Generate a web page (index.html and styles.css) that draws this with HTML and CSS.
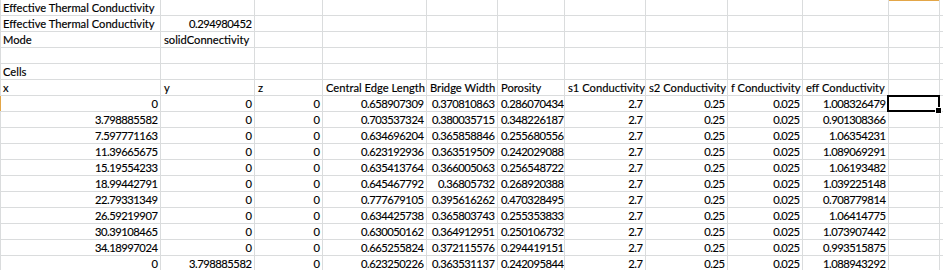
FILE: index.html
```html
<!DOCTYPE html>
<html>
<head>
<meta charset="utf-8">
<link rel="stylesheet" href="styles.css">
</head>
<body>
<div class="sheet">
  <div class="c a">Effective Thermal Conductivity</div><div class="c"></div><div class="c"></div><div class="c"></div><div class="c"></div><div class="c"></div><div class="c"></div><div class="c"></div><div class="c"></div><div class="c"></div><div class="c colhl"></div><div class="c"></div>
  <div class="c a">Effective Thermal Conductivity</div><div class="c r">0.294980452</div><div class="c"></div><div class="c"></div><div class="c"></div><div class="c"></div><div class="c"></div><div class="c"></div><div class="c"></div><div class="c"></div><div class="c"></div><div class="c"></div>
  <div class="c a">Mode</div><div class="c ov">solidConnectivity</div><div class="c"></div><div class="c"></div><div class="c"></div><div class="c"></div><div class="c"></div><div class="c"></div><div class="c"></div><div class="c"></div><div class="c"></div><div class="c"></div>
  <div class="c a"></div><div class="c"></div><div class="c"></div><div class="c"></div><div class="c"></div><div class="c"></div><div class="c"></div><div class="c"></div><div class="c"></div><div class="c"></div><div class="c"></div><div class="c"></div>
  <div class="c a">Cells</div><div class="c"></div><div class="c"></div><div class="c"></div><div class="c"></div><div class="c"></div><div class="c"></div><div class="c"></div><div class="c"></div><div class="c"></div><div class="c"></div><div class="c"></div>
  <div class="c a">x</div><div class="c">y</div><div class="c">z</div><div class="c">Central Edge Length</div><div class="c">Bridge Width</div><div class="c">Porosity</div><div class="c">s1 Conductivity</div><div class="c">s2 Conductivity</div><div class="c">f Conductivity</div><div class="c">eff Conductivity</div><div class="c"></div><div class="c"></div>
  <div class="c a r rowhl">0</div><div class="c r">0</div><div class="c r">0</div><div class="c r">0.658907309</div><div class="c r">0.370810863</div><div class="c r">0.286070434</div><div class="c r">2.7</div><div class="c r">0.25</div><div class="c r">0.025</div><div class="c r">1.008326479</div><div class="c sel"><span class="selbox"><span class="handle"></span></span></div><div class="c"></div>
  <div class="c a r">3.798885582</div><div class="c r">0</div><div class="c r">0</div><div class="c r">0.703537324</div><div class="c r">0.380035715</div><div class="c r">0.348226187</div><div class="c r">2.7</div><div class="c r">0.25</div><div class="c r">0.025</div><div class="c r">0.901308366</div><div class="c"></div><div class="c"></div>
  <div class="c a r">7.597771163</div><div class="c r">0</div><div class="c r">0</div><div class="c r">0.634696204</div><div class="c r">0.365858846</div><div class="c r">0.255680556</div><div class="c r">2.7</div><div class="c r">0.25</div><div class="c r">0.025</div><div class="c r">1.06354231</div><div class="c"></div><div class="c"></div>
  <div class="c a r">11.39665675</div><div class="c r">0</div><div class="c r">0</div><div class="c r">0.623192936</div><div class="c r">0.363519509</div><div class="c r">0.242029088</div><div class="c r">2.7</div><div class="c r">0.25</div><div class="c r">0.025</div><div class="c r">1.089069291</div><div class="c"></div><div class="c"></div>
  <div class="c a r">15.19554233</div><div class="c r">0</div><div class="c r">0</div><div class="c r">0.635413764</div><div class="c r">0.366005063</div><div class="c r">0.256548722</div><div class="c r">2.7</div><div class="c r">0.25</div><div class="c r">0.025</div><div class="c r">1.06193482</div><div class="c"></div><div class="c"></div>
  <div class="c a r">18.99442791</div><div class="c r">0</div><div class="c r">0</div><div class="c r">0.645467792</div><div class="c r">0.36805732</div><div class="c r">0.268920388</div><div class="c r">2.7</div><div class="c r">0.25</div><div class="c r">0.025</div><div class="c r">1.039225148</div><div class="c"></div><div class="c"></div>
  <div class="c a r">22.79331349</div><div class="c r">0</div><div class="c r">0</div><div class="c r">0.777679105</div><div class="c r">0.395616262</div><div class="c r">0.470328495</div><div class="c r">2.7</div><div class="c r">0.25</div><div class="c r">0.025</div><div class="c r">0.708779814</div><div class="c"></div><div class="c"></div>
  <div class="c a r">26.59219907</div><div class="c r">0</div><div class="c r">0</div><div class="c r">0.634425738</div><div class="c r">0.365803743</div><div class="c r">0.255353833</div><div class="c r">2.7</div><div class="c r">0.25</div><div class="c r">0.025</div><div class="c r">1.06414775</div><div class="c"></div><div class="c"></div>
  <div class="c a r">30.39108465</div><div class="c r">0</div><div class="c r">0</div><div class="c r">0.630050162</div><div class="c r">0.364912951</div><div class="c r">0.250106732</div><div class="c r">2.7</div><div class="c r">0.25</div><div class="c r">0.025</div><div class="c r">1.073907442</div><div class="c"></div><div class="c"></div>
  <div class="c a r">34.18997024</div><div class="c r">0</div><div class="c r">0</div><div class="c r">0.665255824</div><div class="c r">0.372115576</div><div class="c r">0.294419151</div><div class="c r">2.7</div><div class="c r">0.25</div><div class="c r">0.025</div><div class="c r">0.993515875</div><div class="c"></div><div class="c"></div>
  <div class="c a r">0</div><div class="c r">3.798885582</div><div class="c r">0</div><div class="c r">0.623250226</div><div class="c r">0.363531137</div><div class="c r">0.242095844</div><div class="c r">2.7</div><div class="c r">0.25</div><div class="c r">0.025</div><div class="c r">1.088943292</div><div class="c"></div><div class="c"></div>
</div>
</body>
</html>
```

FILE: styles.css
```css
html, body {
  margin: 0;
  padding: 0;
  background: #ffffff;
}
body {
  font-family: Lato, "Liberation Sans", sans-serif;
  font-size: 11.2px;
  color: #000000;
  -webkit-text-stroke: 0.15px #000000;
  overflow: hidden;
}
.sheet {
  display: grid;
  grid-template-columns: 161px 94px 68px 104px 71px 67px 81px 82px 75px 86px 51px 1fr;
  grid-auto-rows: 16px;
  width: 943px;
}
.c {
  box-sizing: border-box;
  border-right: 1px solid #dadcdd;
  border-bottom: 1px solid #dadcdd;
  height: 16px;
  line-height: 15px;
  padding: 0 2px 0 3px;
  white-space: nowrap;
  overflow: hidden;
  position: relative;
}
.a {
  box-shadow: inset 1px 0 0 #dadcdd;
}
.r {
  text-align: right;
  letter-spacing: -0.45px;
  padding-right: 2.5px;
}
.ov {
  overflow: visible;
}
.rowhl {
  box-shadow: inset 1px 0 0 #e3a647;
}
.colhl {
  box-shadow: inset 0 1px 0 #e3a647;
}
.sel {
  overflow: visible;
}
.selbox {
  position: absolute;
  left: -2px;
  top: -1px;
  right: -1px;
  bottom: -1px;
  border: 2px solid #000000;
  z-index: 2;
}
.handle {
  position: absolute;
  right: -4px;
  bottom: -4px;
  width: 5px;
  height: 5px;
  background: #000000;
  border: 1px solid #ffffff;
  box-sizing: content-box;
}
```
